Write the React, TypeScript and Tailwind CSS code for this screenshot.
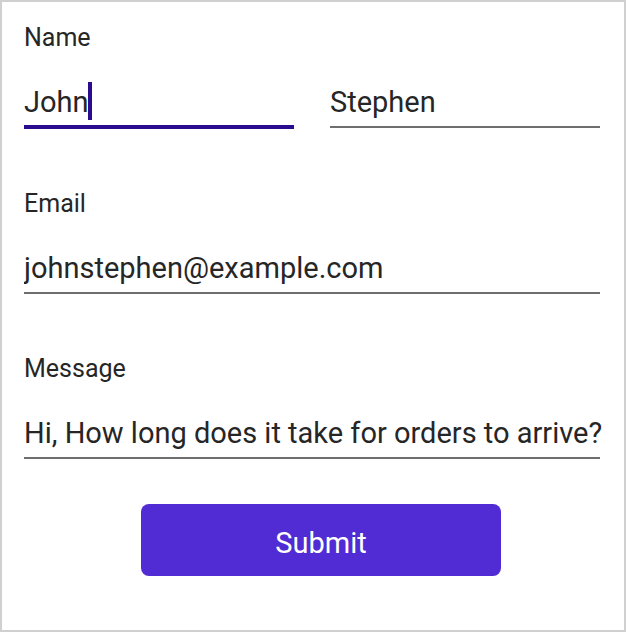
import { useState } from "react";

const labelClass = "block text-[25px] leading-8 text-[#262626]";
const inputClass =
  "block h-12 w-[calc(100%+4px)] min-w-0 bg-transparent text-[29px] leading-[38px] text-[#262626] outline-none rounded-none";
const restLine = "border-b-2 border-[#6e6e6e]";
const activeLine = "border-b-4 border-[#2b0b8e]";

export default function App() {
  const [first, setFirst] = useState("John");
  const [last, setLast] = useState("Stephen");
  const [email, setEmail] = useState("johnstephen@example.com");
  const [message, setMessage] = useState("Hi, How long does it take for orders to arrive?");

  return (
    <main className="min-h-screen border-2 border-[#d0d0d0] bg-white pt-5 pr-6 pb-6 pl-[22px] font-[Roboto,sans-serif]">
      <form onSubmit={(e) => e.preventDefault()}>
        <div className="flex flex-col gap-[59px]">
          <div>
            <label htmlFor="first" className={labelClass}>Name</label>
            <div className="mt-6 grid h-[51px] grid-cols-2 items-start gap-9">
              <div className={`relative ${activeLine}`}>
                <input id="first" value={first} onChange={(e) => setFirst(e.target.value)} className={`${inputClass} h-[47px] pt-px caret-transparent`} />
                <span className="absolute top-1 left-16 h-[38px] w-1 bg-[#2b0b8e]" />
              </div>
              <div className={restLine}>
                <input aria-label="Last name" value={last} onChange={(e) => setLast(e.target.value)} className={inputClass} />
              </div>
            </div>
          </div>
          <div>
            <label htmlFor="email" className={labelClass}>Email</label>
            <div className={`mt-6 ${restLine}`}>
              <input id="email" type="email" value={email} onChange={(e) => setEmail(e.target.value)} className={inputClass} />
            </div>
          </div>
          <div>
            <label htmlFor="message" className={labelClass}>Message</label>
            <div className={`mt-6 ${restLine}`}>
              <input id="message" value={message} onChange={(e) => setMessage(e.target.value)} className={inputClass} />
            </div>
          </div>
        </div>
        <div className="mt-[45px] flex justify-center pl-[18px]">
          <button type="submit" className="h-[72px] w-[360px] max-w-full rounded-lg bg-[#512bd4] pt-1.5 text-[29px] leading-[38px] text-white">
            Submit
          </button>
        </div>
      </form>
    </main>
  );
}
